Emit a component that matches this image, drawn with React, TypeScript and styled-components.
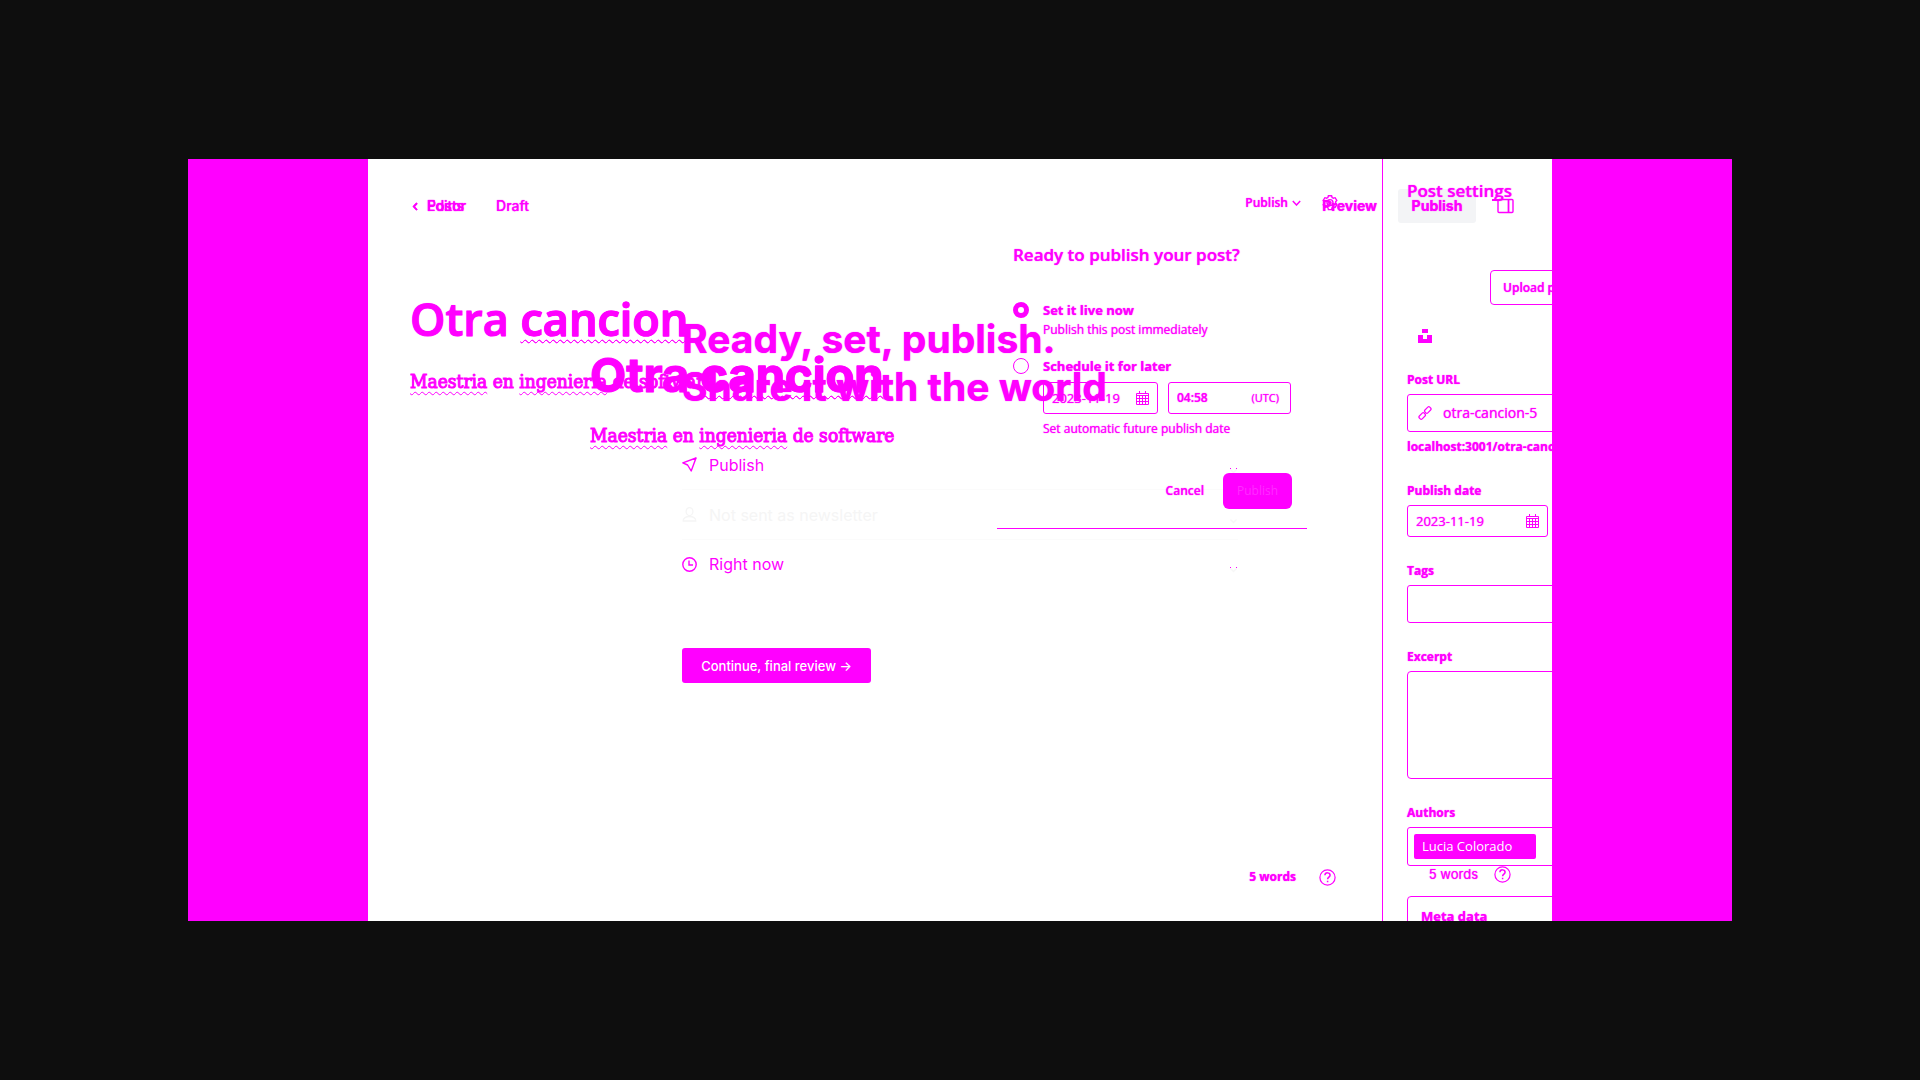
import React from "react";
import styled, { createGlobalStyle, css } from "styled-components";

const INK = "#ff00ff";
const FAINT = "#f5f5f5";
const UI = `"Inter", "Liberation Sans", sans-serif`;
const HUMAN = `"Open Sans", "Noto Sans", sans-serif`;
const SERIF = `"DejaVu Serif Condensed", "DejaVu Serif", serif`;

const Global = createGlobalStyle`
  * { box-sizing: border-box; }
  body { margin: 0; background: #0e0e0e; }
  h1, h2, p { margin: 0; }
  button, input, textarea { font: inherit; color: inherit; text-shadow: inherit; margin: 0; border-radius: 0; }
  button { background: none; border: 0; padding: 0; cursor: pointer; }
`;

const Page = styled.main`
  min-height: 100vh;
  padding: 159px 188px;
  background: #0e0e0e;
`;

const Stage = styled.div`
  height: calc(100vh - 318px);
  padding: 0 180px;
  background: ${INK};
`;

const Canvas = styled.div`
  display: grid;
  grid-template: 100% / 100%;
  height: 100%;
  overflow: hidden;
  background: #fff;
  color: ${INK};
  text-shadow: 0 0 1px currentColor;
`;

const layer = css`
  grid-area: 1 / 1;
  min-width: 0;
  min-height: 0;
`;

const Row = styled.div<{ $gap?: number }>`
  display: flex;
  align-items: center;
  gap: ${(p) => p.$gap ?? 0}px;
`;

const Bar = styled.header<{ $height: number; $right: number }>`
  display: flex;
  align-items: center;
  justify-content: space-between;
  height: ${(p) => p.$height}px;
  padding: 0 ${(p) => p.$right}px 0 44px;
`;

const NavLink = styled.a`
  display: flex;
  align-items: center;
  gap: 8px;
  color: inherit;
  text-decoration: none;
  font: 500 14px/20px ${UI};
`;

const Status = styled.span`
  font: 500 14px/20px ${UI};
`;

const TextButton = styled.button<{ $font: string; $weight: number; $size: number }>`
  display: flex;
  align-items: center;
  gap: 4px;
  font: ${(p) => `${p.$weight} ${p.$size}px/20px ${p.$font}`};
`;

const SoftButton = styled.button`
  width: 78px;
  height: 34px;
  border-radius: 3px;
  background: #f3f4f6;
  font: 700 14px/20px ${UI};
`;

/* Editor with the settings sidebar */
const SplitEditor = styled.section`
  ${layer}
  display: grid;
  grid-template-columns: minmax(0, 1fr) 170px;
`;

const Column = styled.div`
  display: flex;
  flex-direction: column;
  min-height: 0;
`;

const Draft = styled.div<{ $left: number; $top: number }>`
  flex: 1;
  padding: ${(p) => p.$top}px 0 0 ${(p) => p.$left}px;
`;

const PostTitle = styled.h1<{ $font: string; $weight: number; $size: number; $line: number }>`
  margin-bottom: ${(p) => 76 - p.$line}px;
  font: ${(p) => `${p.$weight} ${p.$size}px/${p.$line}px ${p.$font}`};
  -webkit-text-stroke: 1px currentColor;
  white-space: nowrap;
`;

const Body = styled.p`
  font: 400 19px/28px ${SERIF};
  -webkit-text-stroke: 1px currentColor;
  text-shadow: none;
  white-space: nowrap;
`;

const Misspelt = styled.span`
  text-decoration: underline wavy 1px ${INK};
  text-decoration-skip-ink: none;
  text-underline-offset: 3px;
`;

const Counter = styled.footer<{ $font: string; $weight: number; $size: number; $right: number; $bottom: number; $gap: number }>`
  display: flex;
  align-items: center;
  justify-content: flex-end;
  gap: ${(p) => p.$gap}px;
  padding: 0 ${(p) => p.$right}px ${(p) => p.$bottom}px 0;
  font: ${(p) => `${p.$weight} ${p.$size}px/18px ${p.$font}`};
`;

const IconButton = styled.button`
  display: flex;
`;

const Sidebar = styled.aside`
  padding: 20px 0 0 24px;
  border-left: 1px solid ${INK};
  overflow: hidden;
  font: 700 12px/18px ${HUMAN};
  white-space: nowrap;
`;

const SidebarTitle = styled.h2`
  font: 600 17px/24px ${HUMAN};
`;

const Upload = styled.button`
  display: block;
  width: 130px;
  height: 35px;
  margin: 67px 0 0 83px;
  padding: 0 12px;
  border: 1px solid ${INK};
  border-radius: 4px;
  text-align: left;
  font-weight: 600;
`;

const Mark = styled.div`
  display: flex;
  height: 66px;
  padding: 24px 0 0 11px;
`;

const Field = styled.div<{ $after: number }>`
  display: flex;
  flex-direction: column;
  gap: 5px;
  margin-bottom: ${(p) => p.$after}px;

  p { padding-top: 1px; }
`;

const Box = styled.div<{ $width: number; $height: number; $pad?: number }>`
  display: flex;
  align-items: center;
  width: ${(p) => p.$width}px;
  height: ${(p) => p.$height}px;
  padding: 0 ${(p) => p.$pad ?? 8}px;
  border: 1px solid ${INK};
  border-radius: 3px;
  flex: none;
`;

const Input = styled.input<{ $size?: number; $weight?: number }>`
  flex: 1;
  min-width: 0;
  width: 100%;
  padding: 0;
  border: 0;
  outline: 0;
  background: none;
  font: ${(p) => `${p.$weight ?? 500} ${p.$size ?? 13}px/18px ${HUMAN}`};
`;

const Zone = styled.span`
  padding-right: 3px;
  font-size: 11px;
`;

const Area = styled.textarea`
  width: 240px;
  height: 108px;
  padding: 8px;
  border: 1px solid ${INK};
  border-radius: 4px;
  resize: none;
  background: none;
`;

const Token = styled.span`
  width: 122px;
  height: 25px;
  padding: 0 8px;
  border-radius: 2px;
  background: ${INK};
  color: #fff;
  font: 400 13px/25px ${HUMAN};
  text-shadow: none;
`;

const MetaCard = styled.button`
  display: block;
  width: 240px;
  height: 40px;
  padding: 0 13px;
  border: 1px solid ${INK};
  border-radius: 4px;
  font-size: 13px;
  text-align: left;
`;

/* Wide editor */
const WideEditor = styled.section`
  ${layer}
  display: flex;
  flex-direction: column;
`;

/* Publish flow */
const Flow = styled.section`
  ${layer}
  display: flex;
  flex-direction: column;
  align-items: flex-start;
`;

const FlowBody = styled.div`
  width: 556px;
  margin-left: 314px;
  padding-top: 62px;
`;

const Headline = styled.h2`
  font: 700 39px/48px ${UI};
  white-space: nowrap;
`;

const Options = styled.div`
  margin: 29px 0 59px;
`;

const Option = styled.button<{ $muted?: boolean; $last?: boolean }>`
  display: flex;
  align-items: center;
  width: 100%;
  height: ${(p) => (p.$last ? 49 : 50)}px;
  gap: 12px;
  border-bottom: 1px solid ${(p) => (p.$last ? "transparent" : "#fbfbfb")};
  color: ${(p) => (p.$muted ? FAINT : INK)};
  font: 400 16px/20px ${UI};
  text-align: left;
  text-shadow: none;

  span { flex: 1; }
  svg:last-child { margin-top: 12px; }
`;

const Continue = styled.button`
  width: 189px;
  height: 35px;
  border-radius: 3px;
  background: ${INK};
  color: #fff;
  font: 500 13px/20px ${UI};
  text-shadow: none;
  white-space: nowrap;
`;

/* Publish menu */
const MenuLayer = styled.section`
  ${layer}
  display: flex;
  justify-content: flex-end;
  align-items: flex-start;
  padding: 80px 245px 0 0;
`;

const Menu = styled.form`
  width: 310px;
  height: 290px;
  padding: 4px 15px 0 16px;
  border-bottom: 1px solid ${INK};
  font: 500 12px/20px ${HUMAN};
  white-space: nowrap;
`;

const MenuTitle = styled.h2`
  margin-bottom: 33px;
  font: 600 17px/24px ${HUMAN};
`;

const Choice = styled.div<{ $after: number }>`
  display: grid;
  grid-template-columns: 16px auto;
  column-gap: 14px;
  align-items: center;
  margin-bottom: ${(p) => p.$after}px;

  label { font-size: 13px; font-weight: 700; }
  > p, > div { grid-column: 2; }
  > div { margin: 6px 0 5px; }
`;

const Radio = styled.input`
  appearance: none;
  width: 16px;
  height: 16px;
  margin: 0;
  border: 1px solid ${INK};
  border-radius: 50%;

  &:checked { border-width: 5px; }
`;

const Actions = styled.div`
  display: flex;
  justify-content: flex-end;
  align-items: center;
  gap: 19px;
`;

const Confirm = styled.button`
  width: 69px;
  height: 36px;
  border-radius: 6px;
  background: ${INK};
  color: #ff2cff;
  text-shadow: none;
`;

const svg = { fill: "none", stroke: "currentColor", "aria-hidden": true } as const;

const Back = () => (
  <svg width="7" height="9" viewBox="0 0 7 9" {...svg} strokeWidth="1.8"><path d="M5 1.2 1.8 4.6 5 8" /></svg>
);
const Down = () => (
  <svg width="9" height="6" viewBox="0 0 9 6" {...svg} strokeWidth="1.5"><path d="m.8 1 3.7 4L8.2 1" /></svg>
);
const FaintDown = ({ dots }: { dots?: boolean }) => (
  <svg width="9" height="6" viewBox="0 0 9 6" {...svg}>
    <path d="m1.5 1.5 3 3 3-3" stroke="#f7f7f7" strokeWidth="1.3" />
    {dots && <path d="M1.5 0v1M7.5 0v1" stroke={INK} />}
  </svg>
);
const Gear = () => (
  <svg width="16" height="16" viewBox="0 0 16 16" {...svg} strokeWidth="1.4">
    <path d="M6.4.8h3.200l.5 1.700 1.300.7 1.700-.5 1.700 2.700-1.200 1.300v1.600l1.200 1.400-1.700 2.700-1.700-.5-1.300.7-.5 2H6.400l-.5-2-1.300-.7-1.700.5-1.700-2.700 1.200-1.400V6.700L1.200 5.400l1.700-2.700 1.700.5 1.300-.7z" />
    <circle cx="8" cy="7.6" r="3" /><circle cx="8" cy="7.6" r="1" />
  </svg>
);
const PanelIcon = () => (
  <svg width="22" height="16" viewBox="0 0 22 16" {...svg}>
    <rect x="6" y="1.5" width="15" height="13" rx="1" strokeWidth="1.4" />
    <path d="M16.5 1.5v13" strokeWidth="1.8" /><path d="M0 2h6" strokeWidth="2" />
  </svg>
);
const Help = () => (
  <svg width="17" height="17" viewBox="0 0 17 17" {...svg}>
    <circle cx="8.5" cy="8.5" r="7.6" strokeWidth="1.2" />
    <path d="M5.9 6.2c.2-3.200 5.200-3 5.200 0 0 1.800-2.500 2-2.500 4M8.600 11.800v1.400" strokeWidth="1.5" />
  </svg>
);
const Calendar = () => (
  <svg width="13" height="14" viewBox="0 0 13 14" {...svg}>
    <path d="M.5 2.500h12v11H.5zM.5 4.500h12M.5 7.500h12M.5 10.500h12M3.500 4v9M6.500 4v9M9.500 4v9M3.500 0v3M9.500 0v3" />
  </svg>
);
const Link = () => (
  <svg width="14" height="14" viewBox="0 0 14 14" {...svg} strokeWidth="1.2">
    <rect x="-3.4" y="-2" width="6.8" height="4" rx="1.4" transform="translate(9.8 4) rotate(-45)" />
    <rect x="-3.4" y="-2" width="6.8" height="4" rx="1.4" transform="translate(4.2 10) rotate(-45)" />
  </svg>
);
const Unsplash = () => (
  <svg width="14" height="14" viewBox="0 0 14 14" fill="currentColor" aria-hidden>
    <path d="M4 0h6v4H4zM0 6h5v4h4V6h5v8H0z" />
  </svg>
);
const Plane = () => (
  <svg width="15" height="15" viewBox="0 0 15 15" {...svg} strokeWidth="1.4" strokeLinejoin="round">
    <path d="M14 1 .8 5.800 5.600 8 9.200 14z" /><path d="m14 1-2 1.800" />
  </svg>
);
const Person = () => (
  <svg width="15" height="15" viewBox="0 0 15 15" {...svg} strokeWidth="1.3">
    <ellipse cx="7.5" cy="4.6" rx="3.4" ry="4" /><path d="M1.200 14c-.6-6 13.200-6 12.600 0z" />
  </svg>
);
const Clock = () => (
  <svg width="15" height="15" viewBox="0 0 15 15" {...svg} strokeWidth="1.4">
    <circle cx="7.5" cy="7.5" r="6.7" /><path d="M7 3.500v4.500h4" />
  </svg>
);

const Manuscript = ({ font, weight, size, line }: { font: string; weight: number; size: number; line: number }) => (
  <>
    <PostTitle $font={font} $weight={weight} $size={size} $line={line}>Otra <Misspelt>cancion</Misspelt></PostTitle>
    <Body><Misspelt>Maestria</Misspelt> en <Misspelt>ingenieria</Misspelt> de software</Body>
  </>
);

export default function App() {
  return (
    <Page>
      <Global />
      <Stage>
        <Canvas>
          <WideEditor>
            <Bar $height={94} $right={38}>
              <Row $gap={32}>
                <NavLink href="#posts"><Back />Posts</NavLink>
                <Status>Draft</Status>
              </Row>
              <Row $gap={16}>
                <Row $gap={21}>
                  <TextButton $font={UI} $weight={700} $size={14}>Preview</TextButton>
                  <SoftButton>Publish</SoftButton>
                </Row>
                <IconButton aria-label="Toggle sidebar"><PanelIcon /></IconButton>
              </Row>
            </Bar>
            <Draft $left={222} $top={92}>
              <Manuscript font={UI} weight={700} size={47} line={60} />
            </Draft>
            <Counter $font={UI} $weight={400} $size={13} $right={41} $bottom={38} $gap={16}>
              5 words
              <IconButton aria-label="Help"><Help /></IconButton>
            </Counter>
          </WideEditor>

          <SplitEditor>
            <Column>
              <Bar $height={87} $right={44}>
                <span />
                <Row $gap={21}>
                  <TextButton $font={HUMAN} $weight={600} $size={12}>Publish <Down /></TextButton>
                  <IconButton aria-label="Settings"><Gear /></IconButton>
                </Row>
              </Bar>
              <Draft $left={42} $top={45}>
                <Manuscript font={HUMAN} weight={600} size={45} line={56} />
              </Draft>
              <Counter $font={HUMAN} $weight={700} $size={12} $right={46} $bottom={35} $gap={23}>
                5 words
                <IconButton aria-label="Help"><Help /></IconButton>
              </Counter>
            </Column>
            <Sidebar>
              <SidebarTitle>Post settings</SidebarTitle>
              <Upload>Upload post image</Upload>
              <Mark><Unsplash /></Mark>
              <Field $after={26}>
                <label htmlFor="url">Post URL</label>
                <Box $width={240} $height={38} $pad={10}>
                  <Row $gap={11}><Link /><Input id="url" defaultValue="otra-cancion-5" $size={14} /></Row>
                </Box>
                <p>localhost:3001/otra-cancion-5/</p>
              </Field>
              <Field $after={25}>
                <label htmlFor="date">Publish date</label>
                <Box $width={141} $height={32}><Input id="date" defaultValue="2023-11-19" /><Calendar /></Box>
              </Field>
              <Field $after={25}>
                <label htmlFor="tags">Tags</label>
                <Box $width={240} $height={38}><Input id="tags" /></Box>
              </Field>
              <Field $after={25}>
                <label htmlFor="excerpt">Excerpt</label>
                <Area id="excerpt" />
              </Field>
              <Field $after={30}>
                <span>Authors</span>
                <Box $width={240} $height={39} $pad={6}><Token>Lucia Colorado</Token></Box>
              </Field>
              <MetaCard>Meta data</MetaCard>
            </Sidebar>
          </SplitEditor>

          <Flow>
            <Bar $height={94} $right={0}>
              <NavLink href="#editor"><Back />Editor</NavLink>
            </Bar>
            <FlowBody>
              <Headline>Ready, set, publish.<br />Share it with the world</Headline>
              <Options>
                <Option><Plane /><span>Publish</span><FaintDown dots /></Option>
                <Option $muted><Person /><span>Not sent as newsletter</span><FaintDown /></Option>
                <Option $last><Clock /><span>Right now</span><FaintDown dots /></Option>
              </Options>
              <Continue>Continue, final review →</Continue>
            </FlowBody>
          </Flow>

          <MenuLayer>
            <Menu>
              <MenuTitle>Ready to publish your post?</MenuTitle>
              <Choice $after={16}>
                <Radio type="radio" name="when" id="now" defaultChecked />
                <label htmlFor="now">Set it live now</label>
                <p>Publish this post immediately</p>
              </Choice>
              <Choice $after={34}>
                <Radio type="radio" name="when" id="later" />
                <label htmlFor="later">Schedule it for later</label>
                <div>
                  <Row $gap={10}>
                    <Box $width={115} $height={32}>
                      <Input aria-label="Date" defaultValue="2023-11-19" /><Calendar />
                    </Box>
                    <Box $width={123} $height={32} $pad={8}>
                      <Input aria-label="Time" defaultValue="04:58" $size={12} $weight={600} /><Zone>(UTC)</Zone>
                    </Box>
                  </Row>
                </div>
                <p>Set automatic future publish date</p>
              </Choice>
              <Actions>
                <TextButton type="button" $font={HUMAN} $weight={600} $size={12}>Cancel</TextButton>
                <Confirm type="button">Publish</Confirm>
              </Actions>
            </Menu>
          </MenuLayer>
        </Canvas>
      </Stage>
    </Page>
  );
}
